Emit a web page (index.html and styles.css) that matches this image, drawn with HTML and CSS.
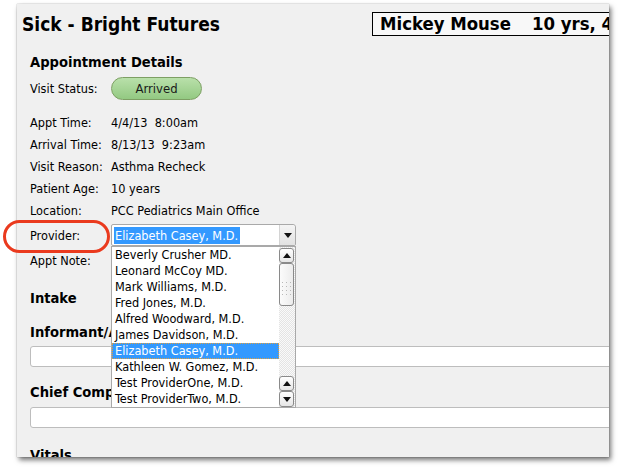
FILE: index.html
```html
<!DOCTYPE html>
<html>
<head>
<meta charset="utf-8">
<link rel="stylesheet" href="styles.css">
</head>
<body>
<div class="window">
  <div class="header">
    <h1 class="title">Sick - Bright Futures</h1>
    <div class="patient"><span>Mickey Mouse</span><span class="age">10 yrs, 4 mos</span></div>
  </div>
  <section class="section">
    <h2 class="heading">Appointment Details</h2>
    <div class="status-row">
      <span class="label">Visit Status:</span>
      <span class="pill">Arrived</span>
    </div>
    <div class="rows">
      <div class="row"><span class="label">Appt Time:</span><span class="value">4/4/13&nbsp; 8:00am</span></div>
      <div class="row"><span class="label">Arrival Time:</span><span class="value">8/13/13&nbsp; 9:23am</span></div>
      <div class="row"><span class="label">Visit Reason:</span><span class="value">Asthma Recheck</span></div>
      <div class="row"><span class="label">Patient Age:</span><span class="value">10 years</span></div>
      <div class="row"><span class="label">Location:</span><span class="value">PCC Pediatrics Main Office</span></div>
      <div class="row provider-row">
        <span class="label">Provider:</span>
        <div class="select">
          <div class="select-field">
            <span class="select-value">Elizabeth Casey, M.D.</span>
            <span class="select-btn"><svg width="8" height="5" viewBox="0 0 8 5"><polygon points="0,0 8,0 4,5" fill="#111"/></svg></span>
          </div>
          <div class="listbox">
            <ul class="options">
              <li>Beverly Crusher MD.</li>
              <li>Leonard McCoy MD.</li>
              <li>Mark Williams, M.D.</li>
              <li>Fred Jones, M.D.</li>
              <li>Alfred Woodward, M.D.</li>
              <li>James Davidson, M.D.</li>
              <li class="selected">Elizabeth Casey, M.D.</li>
              <li>Kathleen W. Gomez, M.D.</li>
              <li>Test ProviderOne, M.D.</li>
              <li>Test ProviderTwo, M.D.</li>
            </ul>
            <div class="scrollbar">
              <div class="sb-btn"><svg width="8" height="5" viewBox="0 0 8 5"><polygon points="0,5 8,5 4,0" fill="#111"/></svg></div>
              <div class="sb-thumb"><svg width="9" height="14" viewBox="0 0 9 14"><g fill="#b8b8b8"><rect x="0" y="0" width="1" height="1"/><rect x="4" y="0" width="1" height="1"/><rect x="8" y="0" width="1" height="1"/><rect x="0" y="4" width="1" height="1"/><rect x="4" y="4" width="1" height="1"/><rect x="8" y="4" width="1" height="1"/><rect x="0" y="8" width="1" height="1"/><rect x="4" y="8" width="1" height="1"/><rect x="8" y="8" width="1" height="1"/><rect x="0" y="12" width="1" height="1"/><rect x="4" y="12" width="1" height="1"/><rect x="8" y="12" width="1" height="1"/></g></svg></div>
              <div class="sb-track"></div>
              <div class="sb-btn"><svg width="8" height="5" viewBox="0 0 8 5"><polygon points="0,5 8,5 4,0" fill="#111"/></svg></div>
              <div class="sb-btn"><svg width="8" height="5" viewBox="0 0 8 5"><polygon points="0,0 8,0 4,5" fill="#111"/></svg></div>
            </div>
          </div>
        </div>
      </div>
      <div class="row"><span class="label">Appt Note:</span></div>
    </div>
  </section>
  <section class="section">
    <h2 class="heading intake">Intake</h2>
    <h2 class="heading field-label">Informant/Accompanied By</h2>
    <div class="input"></div>
    <h2 class="heading field-label">Chief Complaint</h2>
    <div class="input second"></div>
    <h2 class="heading field-label last">Vitals</h2>
  </section>
</div>
<div class="annotation"></div>
</body>
</html>
```

FILE: styles.css
```css
* { box-sizing: border-box; }
html, body { margin: 0; padding: 0; background: #fff; }
body {
  font-family: "DejaVu Sans Condensed", "Liberation Sans", sans-serif;
  font-size: 12.6px;
  color: #000;
  position: relative;
  width: 618px;
  height: 470px;
  overflow: hidden;
}
.window {
  margin: 4px 0 0 17px;
  width: 592px;
  height: 453px;
  background: #f0f0f0;
  box-shadow: 0 0 1px rgba(0,0,0,.4), 2px 3px 5px rgba(0,0,0,.55);
  overflow: hidden;
}
.header {
  display: grid;
  grid-template-columns: 350px max-content;
  align-items: center;
  padding: 8px 0 0 5px;
}
.title {
  margin: 0;
  font-size: 19px;
  font-weight: bold;
  line-height: 24px;
}
.patient {
  height: 24px;
  border: 1px solid #000;
  background: #f8f8f8;
  padding: 0 7px;
  font-size: 18.4px;
  font-weight: bold;
  line-height: 22px;
  white-space: nowrap;
  display: flex;
  gap: 21px;
}
.section { padding-left: 13px; }
.heading {
  margin: 16px 0 0;
  font-size: 14.6px;
  font-weight: bold;
  line-height: 20px;
  white-space: nowrap;
}
.status-row {
  margin-top: 5px;
  height: 23px;
  display: flex;
  align-items: center;
}
.label { width: 81px; flex: none; }
.pill {
  width: 91px;
  height: 23px;
  border-radius: 12px;
  border: 1px solid #7d9f63;
  background: linear-gradient(#b9e0aa, #93c982);
  display: flex;
  align-items: center;
  justify-content: center;
  font-size: 13px;
  color: #1a1a1a;
}
.rows { margin-top: 11px; }
.row {
  height: 22px;
  display: flex;
  align-items: center;
  white-space: nowrap;
}
.provider-row { height: 28px; }
.select { position: relative; width: 185px; }
.select-field {
  height: 22px;
  border: 1px solid #a9a9a9;
  border-radius: 2px 3px 2px 2px;
  background: #fff;
  display: flex;
  align-items: center;
  justify-content: space-between;
}
.select-value {
  margin-left: 2px;
  background: #3399ff;
  color: #fff;
  line-height: 17px;
  padding: 0 2px 0 1px;
}
.select-btn {
  width: 16px;
  height: 20px;
  background: linear-gradient(#f4f4f4, #e2e2e2);
  border-left: 1px solid #d4d4d4;
  border-radius: 0 3px 0 0;
  display: flex;
  align-items: center;
  justify-content: center;
}
.listbox {
  position: absolute;
  top: 22px;
  left: 0;
  width: 185px;
  height: 162px;
  border: 1px solid #a9a9a9;
  background: #fff;
  display: flex;
  z-index: 2;
}
.options {
  list-style: none;
  margin: 0;
  padding: 0;
  flex: 1;
}
.options li {
  height: 16px;
  line-height: 16px;
  padding-left: 3px;
  white-space: nowrap;
}
.options li.selected {
  background: #3399ff;
  color: #fff;
  outline: 1px dotted #e0a040;
  outline-offset: -1px;
}
.scrollbar {
  width: 16px;
  display: flex;
  flex-direction: column;
  padding: 1px 1px 0 0;
  background: repeating-conic-gradient(#e4e4e4 0 25%, #fafafa 0 50%) 0 0 / 2px 2px;
}
.sb-btn {
  height: 15px;
  border: 1px solid #8a8a8a;
  border-radius: 3px;
  background: linear-gradient(#ffffff, #e6e6e6);
  display: flex;
  align-items: center;
  justify-content: center;
}
.sb-btn + .sb-btn { height: 16px; }
.sb-thumb {
  height: 43px;
  border: 1px solid #8a8a8a;
  border-radius: 3px;
  background: linear-gradient(90deg, #fbfbfb, #ececec);
  display: flex;
  align-items: center;
  justify-content: center;
  padding-top: 8px;
}
.sb-track { flex: 1; }
.intake { margin-top: 17px; }
.field-label { margin-top: 14px; }
.input {
  margin-top: 4px;
  width: 600px;
  height: 21px;
  border: 1px solid #bdbdbd;
  border-radius: 3px;
  background: #fff;
}
.input + .field-label { margin-top: 15px; }
.input.second { margin-top: 5px; }
.input + .field-label.last { margin-top: 17px; }
.annotation {
  position: absolute;
  left: 3px;
  top: 220px;
  width: 107px;
  height: 33px;
  border: 3px solid #ea3a1e;
  border-radius: 17px;
}
```
